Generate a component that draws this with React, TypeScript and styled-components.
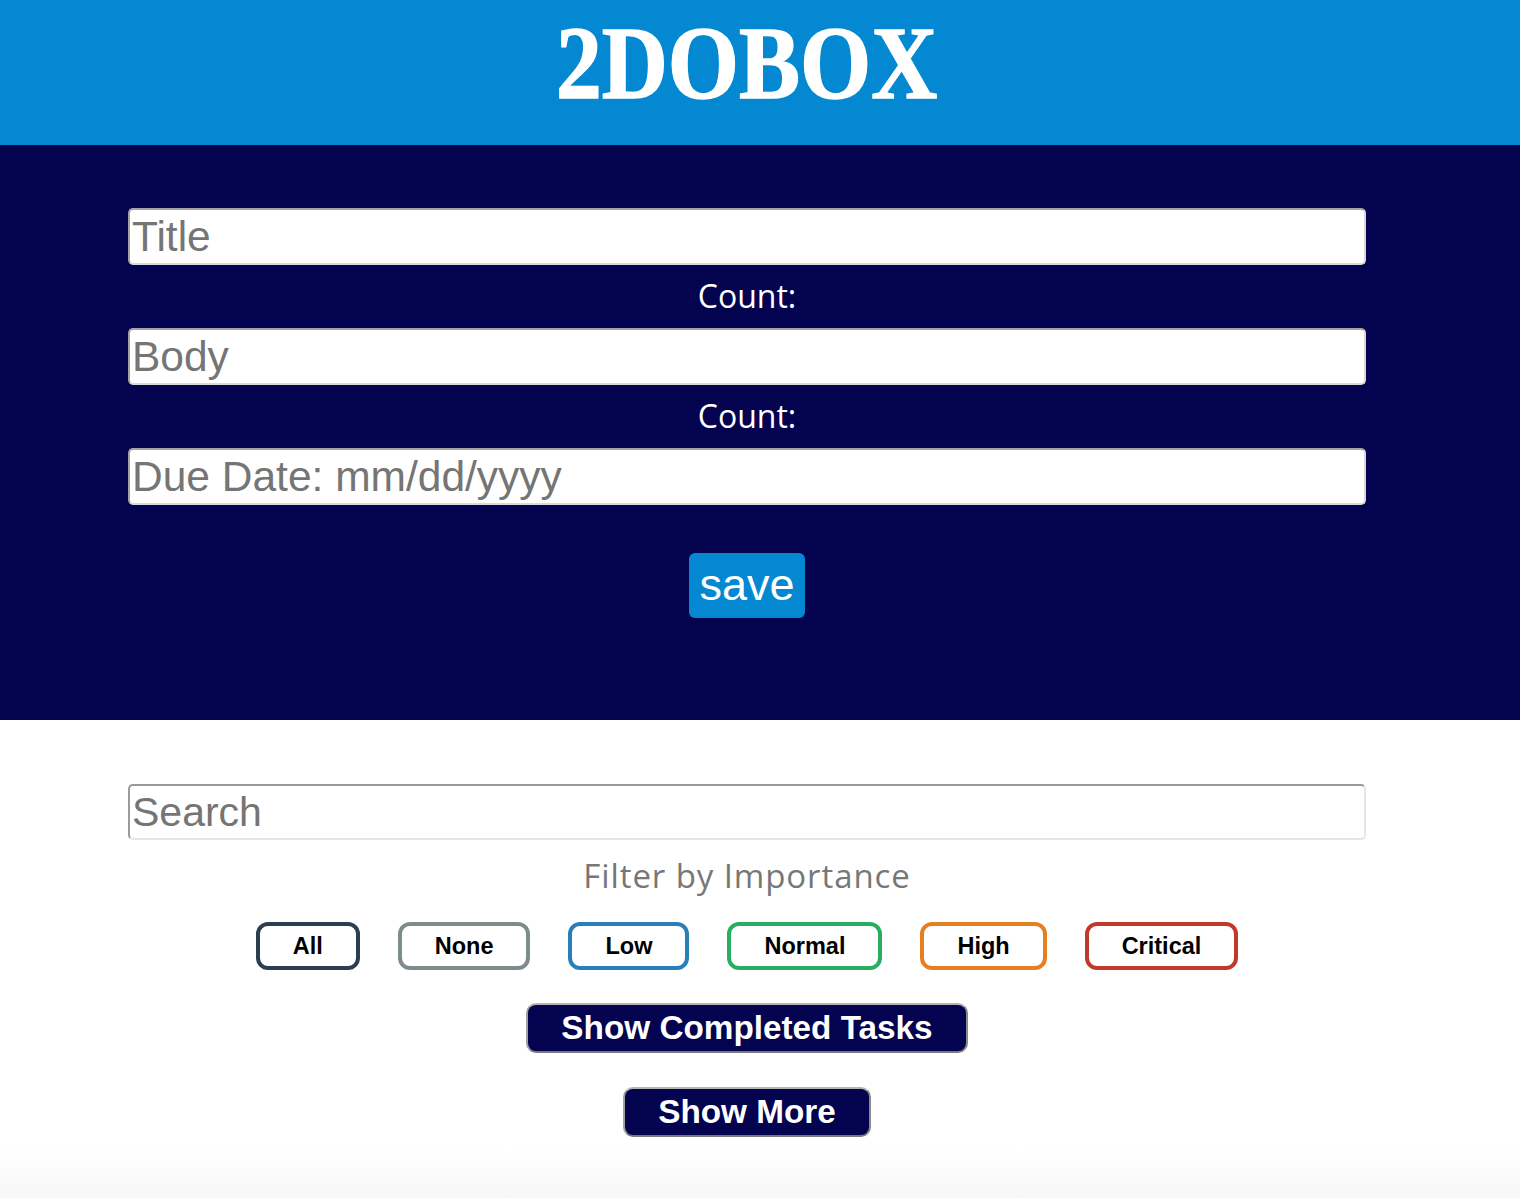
import React from "react";
import styled, { createGlobalStyle } from "styled-components";

const GlobalStyle = createGlobalStyle`
  html, body {
    margin: 0;
    padding: 0;
    background: #ffffff;
  }
  * { box-sizing: border-box; }
`;

const Page = styled.div`
  display: flex;
  flex-direction: column;
  min-height: 1198px;
  background: #ffffff;
`;

const Header = styled.header`
  background: #0388d1;
  height: 145px;
  display: flex;
  align-items: center;
  justify-content: center;
  padding: 0 154px 0 128px;
`;

const Logo = styled.h1`
  margin: 0;
  color: #ffffff;
  font-family: "Liberation Serif", "Times New Roman", serif;
  font-weight: 700;
  font-size: 104px;
  line-height: 1;
  -webkit-text-stroke: 1.5px #ffffff;
  transform: translateY(-10px) scaleX(0.88);
`;

const FormSection = styled.section`
  background: #03034f;
  padding: 63px 154px 102px 128px;
  display: flex;
  flex-direction: column;
  align-items: center;
`;

const TextField = styled.input`
  width: 1238px;
  height: 57px;
  border-radius: 5px;
  border: 2px solid;
  border-color: #a3a3a3 #d9d9d9 #d9d9d9 #a3a3a3;
  background: #ffffff;
  padding: 0 2px;
  font-family: "Liberation Sans", Arial, sans-serif;
  font-size: 42.5px;
  color: #222;
  outline: none;
  &::placeholder {
    color: #757575;
  }
`;

const CountLabel = styled.div`
  height: 63px;
  display: flex;
  align-items: center;
  justify-content: center;
  color: #ffffff;
  font-family: "Open Sans", "Noto Sans", sans-serif;
  font-size: 32px;
  padding-bottom: 2px;
`;

const SaveButton = styled.button`
  margin-top: 48px;
  height: 65px;
  padding: 0 10px;
  border: none;
  border-radius: 6px;
  background: #0388d1;
  color: #ffffff;
  font-family: "Liberation Sans", Arial, sans-serif;
  font-size: 45px;
  line-height: 1;
  padding-bottom: 2px;
  cursor: pointer;
`;

const FilterSection = styled.section`
  padding: 64px 154px 0 128px;
  display: flex;
  flex-direction: column;
  align-items: center;
`;

const SearchField = styled(TextField)`
  height: 56px;
  font-size: 41px;
  border-color: #9a9a9a #e6e6e6 #e6e6e6 #9a9a9a;
`;

const FilterTitle = styled.div`
  margin-top: 13px;
  color: #777777;
  font-family: "Open Sans", "Noto Sans", sans-serif;
  font-size: 33px;
  letter-spacing: 0.9px;
  line-height: 45px;
`;

const FilterRow = styled.div`
  margin-top: 24px;
  display: flex;
  justify-content: center;
  gap: 38px;
`;

const FilterButton = styled.button<{ $color: string }>`
  height: 48px;
  padding: 0 33px;
  border: 4px solid ${(p) => p.$color};
  border-radius: 12px;
  background: #ffffff;
  color: #000000;
  font-family: "Liberation Sans", Arial, sans-serif;
  font-weight: 700;
  font-size: 23.5px;
  cursor: pointer;
`;

const DarkButton = styled.button<{ $top: number }>`
  margin-top: ${(p) => p.$top}px;
  height: 50px;
  padding: 0 33px;
  border: 2px solid;
  border-color: #b5b5b5 #8a8a8a #7a7a7a #a0a0a0;
  border-radius: 10px;
  background: #03034f;
  color: #ffffff;
  font-family: "Liberation Sans", Arial, sans-serif;
  font-weight: 700;
  font-size: 33.3px;
  line-height: 1;
  cursor: pointer;
`;

const Spacer = styled.div`
  flex: 1;
`;

const Fade = styled.div`
  height: 50px;
  background: linear-gradient(to bottom, #ffffff, #f7f7f7);
`;

const filters = [
  { label: "All", color: "#2c3e50" },
  { label: "None", color: "#7f8c8d" },
  { label: "Low", color: "#2980b9" },
  { label: "Normal", color: "#27ae60" },
  { label: "High", color: "#e67e22" },
  { label: "Critical", color: "#c0392b" },
];

export default function App() {
  return (
    <>
      <GlobalStyle />
      <Page>
        <Header>
          <Logo>2DOBOX</Logo>
        </Header>
        <FormSection>
          <TextField placeholder="Title" />
          <CountLabel>Count:</CountLabel>
          <TextField placeholder="Body" />
          <CountLabel>Count:</CountLabel>
          <TextField placeholder="Due Date: mm/dd/yyyy" />
          <SaveButton>save</SaveButton>
        </FormSection>
        <FilterSection>
          <SearchField placeholder="Search" />
          <FilterTitle>Filter by Importance</FilterTitle>
          <FilterRow>
            {filters.map((f) => (
              <FilterButton key={f.label} $color={f.color}>
                {f.label}
              </FilterButton>
            ))}
          </FilterRow>
          <DarkButton $top={33}>Show Completed Tasks</DarkButton>
          <DarkButton $top={34}>Show More</DarkButton>
        </FilterSection>
        <Spacer />
        <Fade />
      </Page>
    </>
  );
}
